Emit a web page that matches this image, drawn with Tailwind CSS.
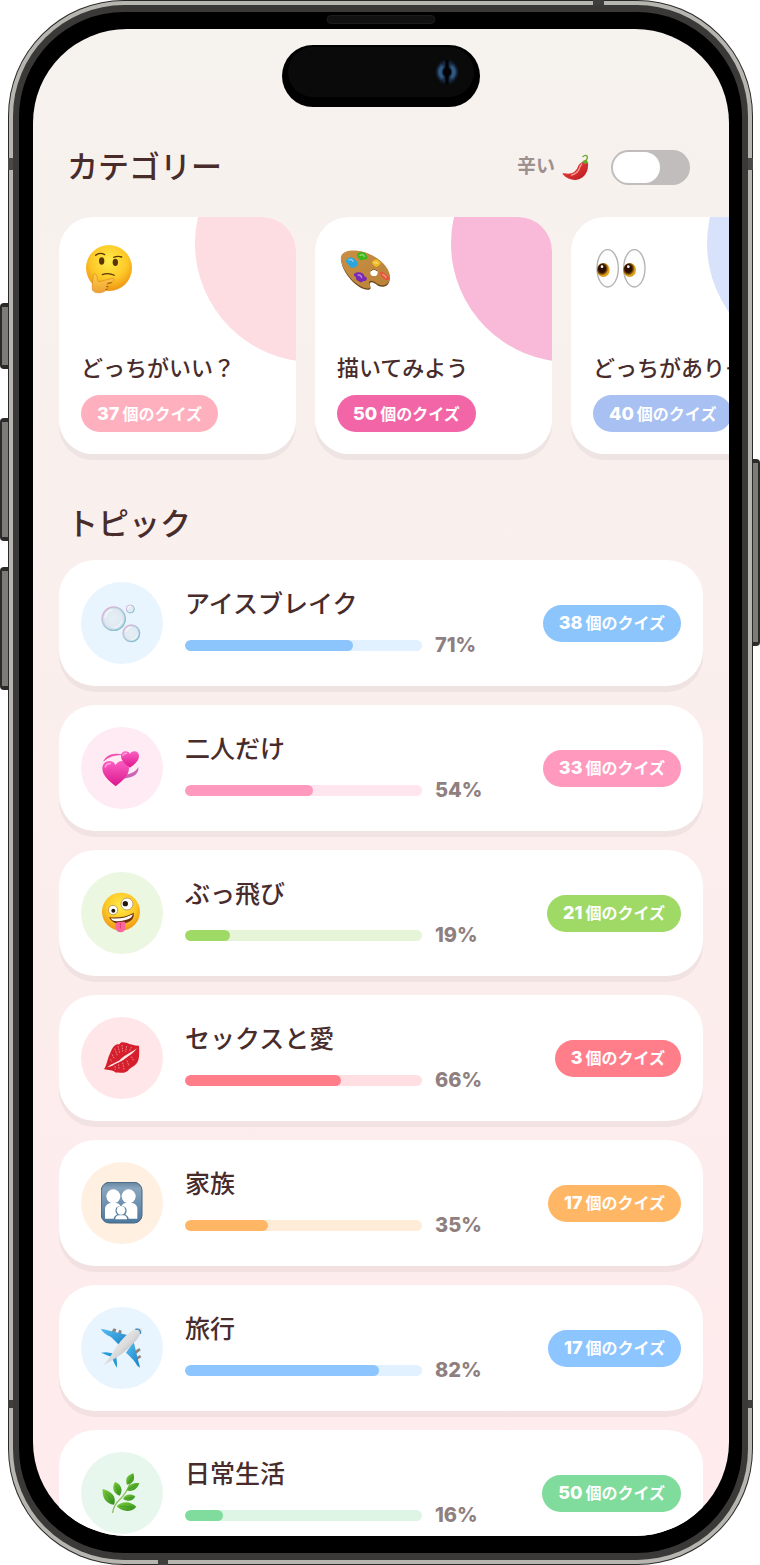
<!DOCTYPE html>
<html lang="ja">
<head>
    <meta charset="UTF-8">
    <meta name="viewport" content="width=device-width, initial-scale=1.0">
    <title>クイズ</title>
    <script src="https://cdn.jsdelivr.net/npm/@tailwindcss/browser@4"></script>
</head>
<body class="bg-white font-['Inter','Noto_Sans_CJK_JP',sans-serif] text-[#482c2c]">

<!-- Icon sprite -->
<svg class="absolute size-0" aria-hidden="true">
    <defs>
        <radialGradient id="face" cx=".5" cy=".35" r=".65">
            <stop offset="0" stop-color="#ffec4a"/><stop offset=".6" stop-color="#fdc927"/><stop offset="1" stop-color="#ee9415"/>
        </radialGradient>
        <linearGradient id="hand" x2="0" y2="1"><stop stop-color="#ffd04a"/><stop offset="1" stop-color="#eda033"/></linearGradient>
        <linearGradient id="wood" x2="1" y2="1"><stop stop-color="#c99045"/><stop offset="1" stop-color="#b98238"/></linearGradient>
        <radialGradient id="iris" cx=".4" cy=".4"><stop offset=".55" stop-color="#2c0f02"/><stop offset=".75" stop-color="#7a4605"/><stop offset="1" stop-color="#dca41c"/></radialGradient>
        <radialGradient id="bubble"><stop offset="0" stop-color="#e6eff5"/><stop offset=".75" stop-color="#dfe9f1"/><stop offset="1" stop-color="#c4d8e5"/></radialGradient>
        <linearGradient id="rim" x2="1" y2="1"><stop stop-color="#f3a6d3"/><stop offset=".4" stop-color="#b9c4d6"/><stop offset="1" stop-color="#6dbccb"/></linearGradient>
        <linearGradient id="heart" x2="0" y2="1"><stop stop-color="#fb5fc3"/><stop offset="1" stop-color="#dc168c"/></linearGradient>
        <linearGradient id="tile" x2="0" y2="1"><stop stop-color="#66869f"/><stop offset=".15" stop-color="#89a5bf"/><stop offset="1" stop-color="#4d789d"/></linearGradient>
        <linearGradient id="hull" x2="1" y2="1"><stop stop-color="#ffffff"/><stop offset=".5" stop-color="#dcdcdd"/><stop offset="1" stop-color="#8b8d91"/></linearGradient>
        <linearGradient id="wing" x2="1" y2="1"><stop stop-color="#5abdf0"/><stop offset="1" stop-color="#1680c4"/></linearGradient>
        <linearGradient id="leaf" x2="1" y2="1"><stop stop-color="#7fcf3c"/><stop offset="1" stop-color="#2e8a1c"/></linearGradient>
        <linearGradient id="chili" x2="1" y2="1"><stop stop-color="#f2524a"/><stop offset="1" stop-color="#b8141c"/></linearGradient>
    </defs>

    <symbol id="thinking" viewBox="0 0 162 162">
        <circle cx="84" cy="81" r="69" fill="url(#face)"/>
        <path d="M44 43 Q56 32 71 41 M98 49 Q110 44 122 48" fill="none" stroke="#5a3505" stroke-width="4" stroke-linecap="round"/>
        <ellipse cx="62" cy="60" rx="8" ry="11" fill="#5a3505"/>
        <ellipse cx="103" cy="64" rx="8" ry="11" fill="#5a3505"/>
        <path d="M64 101 Q82 94 100 103" fill="none" stroke="#5a3505" stroke-width="3.5" stroke-linecap="round"/>
        <path d="M37 101 C43 96 48 101 49 113 L52 122 C66 121 82 113 97 112 C104 114 99 122 91 124 L77 130 C83 134 80 146 72 150 C60 158 40 157 35 148 C31 136 36 118 37 101Z" fill="url(#hand)" stroke="#d98a1e" stroke-width="2"/>
        <path d="M79 127 L92 125 M76 137 H82 M74 145 H79" stroke="#8f5410" stroke-width="3"/>
    </symbol>

    <symbol id="palette" viewBox="0 0 162 162">
        <path d="M13 61 C8 38 28 26 62 31 C107 36 154 72 158 108 C160 134 140 143 123 134 C112 126 102 120 99 127 C96 134 104 139 99 145 C75 156 18 105 13 61Z" fill="#6c4517"/>
        <path d="M12 57 C8 36 28 26 62 29 C107 34 155 70 159 105 C160 130 140 139 124 130 C112 122 101 116 97 122 C94 129 104 135 99 141 C75 151 18 101 12 57Z" fill="url(#wood)"/>
        <ellipse cx="111" cy="95" rx="11" ry="10" fill="#fff"/>
        <path d="M101 91 Q108 80 121 90" fill="none" stroke="#7a4e1a" stroke-width="3"/>
        <path d="M27 58 Q37 45 48 51 L60 61 Q66 77 56 77 L46 81 Q38 79 36 72 Q27 68 27 58Z" fill="#2ba6dd"/>
        <path d="M62 36 Q76 30 85 37 L92 48 Q89 60 80 55 Q72 62 66 53 Q57 47 62 36Z" fill="#3fb61c"/>
        <path d="M107 60 Q118 52 125 59 Q135 66 128 71 L119 78 Q110 76 107 69 Q102 65 107 60Z" fill="#f0bd22"/>
        <path d="M51 99 Q58 92 65 94 Q79 94 82 105 L90 111 Q89 122 79 120 Q71 128 65 120 Q55 117 57 108 Q49 105 51 99Z" fill="#7a28b4"/>
        <path d="M129 94 Q140 91 147 101 Q158 106 157 114 Q147 122 140 112 Q130 107 129 94Z" fill="#ec523a"/>
        <path d="M36 57 Q43 52 48 61 M69 43 Q77 38 82 46 M112 66 Q118 62 121 67 M63 102 Q72 101 74 110 M137 101 Q144 103 147 109" fill="none" stroke="#fff" stroke-opacity=".45" stroke-width="4" stroke-linecap="round"/>
    </symbol>

    <symbol id="eyes" viewBox="0 0 162 162">
        <ellipse cx="44" cy="82" rx="32" ry="56" fill="#fdfdfd" stroke="#b3b1b3" stroke-width="4"/>
        <ellipse cx="124" cy="82" rx="32" ry="56" fill="#fdfdfd" stroke="#b3b1b3" stroke-width="4"/>
        <ellipse cx="31" cy="87" rx="19" ry="21" fill="url(#iris)"/>
        <ellipse cx="110" cy="87" rx="19" ry="21" fill="url(#iris)"/>
        <circle cx="27" cy="77" r="4" fill="#fff"/>
        <circle cx="106" cy="77" r="4" fill="#fff"/>
    </symbol>

    <symbol id="pepper" viewBox="0 0 81 81">
        <path d="M60 25 Q69 18 78 28 Q80 55 62 70 C45 83 18 79 2 61 Q0 56 8 58 C28 62 40 55 46 42 Q51 28 60 25Z" fill="url(#chili)"/>
        <path d="M59 30 Q54 36 51 46 Q46 59 29 63" fill="none" stroke="#ff9d92" stroke-width="4" stroke-linecap="round"/>
        <path d="M58 26 Q65 17 71 17 Q77 18 79 29 Q73 26 70 31 Q65 24 58 26Z" fill="#6ba92e"/>
        <path d="M72 20 Q80 8 73 5 Q68 2 63 8" fill="none" stroke="#6ba92e" stroke-width="4" stroke-linecap="round"/>
    </symbol>

    <symbol id="bubbles" viewBox="0 0 126 126">
        <g fill="url(#bubble)" stroke="url(#rim)">
            <circle cx="38" cy="50" r="35" stroke-width="4"/>
            <circle cx="91" cy="94" r="25" stroke-width="4"/>
            <circle cx="88" cy="21" r="12" stroke-width="3"/>
        </g>
        <path d="M12 46 Q16 28 33 23 M74 89 Q78 78 88 76 M80 19 Q83 13 88 13" fill="none" stroke="#fff" stroke-width="5" stroke-linecap="round" stroke-opacity=".6"/>
        <path d="M37 77 Q56 75 63 57 M91 112 Q105 111 109 98" fill="none" stroke="#fff" stroke-width="4" stroke-linecap="round" stroke-opacity=".5"/>
    </symbol>

    <symbol id="hearts" viewBox="0 0 126 126">
        <path d="M8 42 Q22 15 64 23 Q30 22 8 42Z" fill="#f04cae" stroke="#f04cae" stroke-width="2"/>
        <path d="M112 60 Q116 90 66 95 L73 83 Q102 80 112 60Z" fill="#c965b4"/>
        <path d="M44 118 C24 102 4 86 4 64 C4 50 14 42 25 42 C34 42 41 47 44 55 C47 47 54 42 63 42 C74 42 84 50 84 64 C84 86 64 102 44 118Z" fill="url(#heart)"/>
        <path d="M87 62 C73 52 60 41 60 27 C60 18 66 13 74 13 C80 13 85 16 87 21 C89 16 94 13 100 13 C108 13 114 18 114 27 C114 41 101 52 87 62Z" fill="url(#heart)"/>
        <path d="M13 60 Q16 49 28 50 M66 25 Q68 18 76 19" fill="none" stroke="#ff9adb" stroke-width="5" stroke-linecap="round"/>
    </symbol>

    <symbol id="zany" viewBox="0 0 126 126">
        <circle cx="60" cy="59" r="57" fill="url(#face)"/>
        <circle cx="36" cy="54" r="14" fill="#fff" stroke="#a9783a" stroke-width="2"/>
        <circle cx="78" cy="36" r="18" fill="#fff" stroke="#a9783a" stroke-width="2"/>
        <circle cx="37" cy="56" r="6" fill="#24190f"/>
        <circle cx="73" cy="35" r="8" fill="#24190f"/>
        <path d="M24 76 Q68 80 98 62 Q102 84 76 93 Q39 104 24 76Z" fill="#6b3008"/>
        <path d="M29 79 Q68 83 95 67 Q94 77 81 82 Q50 92 34 85Z" fill="#fff"/>
        <path d="M43 93 Q58 87 73 90 V108 Q71 121 59 121 Q46 121 44 108Z" fill="#f9659c"/>
        <path d="M58 93 V108" stroke="#d43d76" stroke-width="3" stroke-linecap="round"/>
    </symbol>

    <symbol id="kiss" viewBox="0 0 126 126">
        <path d="M9 97 C18 84 19 64 29 45 C36 28 43 22 51 22 C58 24 56 16 64 16 C78 15 91 27 114 26 C115 48 116 70 106 80 C96 91 86 92 80 102 C66 112 55 104 45 107 C35 99 22 100 9 97Z" fill="#d61f2c"/>
        <path d="M19 91 C36 78 46 76 56 70 C65 58 85 50 108 34 C94 53 86 54 75 63 C62 75 44 78 33 87Z" fill="#ffe7e9"/>
        <path d="M41 35 L49 55 M51 27 L56 48 M63 24 L65 44 M77 27 L74 45 M91 30 L86 42 M33 52 L40 66 M28 66 L33 75 M53 82 L54 98 M65 77 L69 97 M78 71 L84 87 M91 59 L99 72 M42 87 L43 98" stroke="#fff" stroke-width="2.5" stroke-opacity=".55" stroke-dasharray="5 3"/>
    </symbol>

    <symbol id="family" viewBox="0 0 126 126">
        <rect x="1" y="1" width="122" height="122" rx="24" fill="url(#tile)" stroke="#426584" stroke-width="3"/>
        <g fill="#fff">
            <path d="M12 110 V82 Q13 62 34 62 H39 Q56 62 60 75 Q64 62 80 62 H88 Q109 62 109 82 V110Z"/>
            <circle cx="37" cy="43" r="21"/>
            <circle cx="83" cy="43" r="21"/>
        </g>
        <path d="M38 112 Q38 101 48 98 Q39 86 47 76 Q60 66 73 76 Q81 86 73 98 Q83 101 83 112Z" fill="#5880a3"/>
        <circle cx="60" cy="85" r="13" fill="#fff"/>
        <path d="M43 112 Q43 101 54 100 H67 Q78 101 78 112Z" fill="#fff"/>
    </symbol>

    <symbol id="plane" viewBox="0 0 126 126">
        <path d="M30 17 L38 4 L46 7 L42 20Z M50 20 L55 8 L62 11 L60 25Z M101 72 L115 63 L119 70 L106 80Z M105 91 L117 84 L121 91 L108 99Z" fill="#8f8580"/>
        <path d="M0 5 L14 8 L82 25 L58 58 L30 30 Q4 18 0 5Z" fill="url(#wing)"/>
        <path d="M117 122 L109 116 Q99 98 75 77 L98 44 L111 98Z" fill="url(#wing)"/>
        <path d="M0 77 L15 76 L43 80 L33 91Z M48 122 L42 113 L34 95 L45 84 L48 108Z" fill="#279ad8"/>
        <path d="M8 115 L29 87 Q57 37 91 13 Q111 -3 121 5 Q126 12 111 33 Q86 66 43 94Z" fill="url(#hull)"/>
        <path d="M103 7 Q119 4 119 20" fill="none" stroke="#3688bd" stroke-width="4"/>
    </symbol>

    <symbol id="herb" viewBox="0 0 126 126">
        <path d="M35 121 Q39 98 55 84 Q78 62 88 31" fill="none" stroke="#8cbc5d" stroke-width="4" stroke-linecap="round"/>
        <g fill="url(#leaf)">
            <path d="M97 4 C103 20 98 36 78 38 C71 20 80 9 97 4Z"/>
            <path d="M115 33 C110 51 94 61 77 55 C81 38 95 31 115 33Z"/>
            <path d="M42 30 C61 37 67 55 56 71 C36 64 32 46 42 30Z"/>
            <path d="M5 51 C32 57 48 76 39 98 C14 96 3 76 5 51Z"/>
            <path d="M103 73 C96 89 78 90 66 80 C74 65 90 64 103 73Z"/>
            <path d="M106 104 C92 122 64 121 47 103 C64 85 90 89 106 104Z"/>
        </g>
        <path d="M94 13 L80 35 M107 37 L82 52 M44 39 L53 64 M13 60 L36 92 M97 76 L71 79 M97 105 L55 103" stroke="#23751a" stroke-opacity=".45" stroke-width="2"/>
    </symbol>
</svg>

<div class="relative h-screen overflow-hidden pl-2 pr-[7px]">

    <!-- Side buttons -->
    <div class="absolute left-0 top-[303px] h-[66px] w-2 rounded-l-sm border-y-4 border-l-2 border-[#2c2b29] bg-[#7e7c76]"></div>
    <div class="absolute left-0 top-[418px] h-[123px] w-2 rounded-l-sm border-y-4 border-l-2 border-[#2c2b29] bg-[#7e7c76]"></div>
    <div class="absolute left-0 top-[567px] h-[123px] w-2 rounded-l-sm border-y-4 border-l-2 border-[#2c2b29] bg-[#7e7c76]"></div>
    <div class="absolute right-0 top-[459px] h-[187px] w-2 rounded-r-sm border-y-4 border-r-2 border-[#2c2b29] bg-[#7e7c76]"></div>

    <!-- Phone body -->
    <div class="relative h-full rounded-[116px] bg-[#2b2a29] p-px">
        <div class="h-full rounded-[115px] bg-[#b7b5b0] p-1">
            <div class="h-full rounded-[111px] bg-[#3a3937] px-[6px] py-[7px]">
                <div class="h-full rounded-[105px] bg-black py-[17px] pl-[14px] pr-[13px]">

                    <!-- Screen -->
                    <main class="h-full overflow-hidden rounded-[94px] bg-linear-to-b from-[#f6f2ee] via-[#fbeeed] via-50% to-[#ffebed] pt-[120px]">
                        <header class="flex h-9 items-center justify-between pl-[34px] pr-[39px]">
                            <h1 class="text-[31px] font-medium leading-9">カテゴリー</h1>
                            <div class="flex items-center">
                                <label for="spicy" class="flex items-center gap-[7px] text-[19px] font-bold leading-6 text-[#9d908f]">
                                    辛い
                                    <svg class="size-[27px]"><use href="#pepper"/></svg>
                                </label>
                                <input id="spicy" type="checkbox" class="ml-[22px] h-[35px] w-[79px] appearance-none rounded-full bg-[#c0bdbc] p-[2px] before:block before:h-[31px] before:w-[47px] before:rounded-full before:bg-white before:content-[''] checked:bg-[#ff7e8a] checked:before:ml-7">
                            </div>
                        </header>

                        <section id="categories" class="mt-8 flex gap-[19px] pl-[26px]"></section>

                        <h2 class="mt-[50px] pl-[34px] text-[31px] font-medium leading-10">トピック</h2>
                        <section id="topics" class="mt-4 flex flex-col gap-[19px] px-[26px]"></section>
                    </main>
                </div>
            </div>
        </div>

        <!-- Antenna bands -->
        <div class="absolute right-[149px] top-0 h-[5px] w-[11px] bg-[#3f3e3c]"></div>
        <div class="absolute bottom-0 left-[150px] h-[5px] w-[10px] bg-[#3f3e3c]"></div>
        <div class="absolute left-0 top-[158px] h-3 w-[5px] bg-[#4a4947]"></div>
        <div class="absolute right-0 top-[158px] h-3 w-[5px] bg-[#4a4947]"></div>
        <div class="absolute bottom-[157px] left-0 h-2 w-[5px] bg-[#3f3e3c]"></div>
        <div class="absolute bottom-[157px] right-0 h-2 w-[5px] bg-[#3f3e3c]"></div>

        <!-- Speaker and camera island -->
        <div class="absolute left-1/2 top-[15px] h-[9px] w-[109px] -translate-x-1/2 rounded-full border border-[#1c1c1c] bg-[#111111]"></div>
        <div class="absolute left-1/2 top-[45px] h-[62px] w-[198px] -translate-x-1/2 rounded-full bg-black px-[6px] pt-[2px]">
            <div class="flex h-[50px] items-center justify-end rounded-full bg-[#0a0a0a] pr-[14px]">
                <svg viewBox="0 0 26 26" class="size-[26px]">
                    <g fill="none" stroke-linecap="round" class="blur-[1px]">
                        <path d="M10 5 Q1 13 10 21 M16 5 Q25 13 16 21" stroke="#14283f" stroke-width="6"/>
                        <path d="M8 8 Q4 13 8 18 M18 8 Q22 13 18 18" stroke="#35608f" stroke-width="4"/>
                    </g>
                    <circle cx="13" cy="13" r="4" fill="#020202"/>
                    <path d="M13 1 V25" stroke="#020202" stroke-width="3"/>
                </svg>
            </div>
        </div>
    </div>
</div>

<script>
    const categories = [
        { icon: 'thinking', title: 'どっちがいい？', count: 37, badge: 'bg-[#ffb0be]', circle: 'bg-[#fddde2]' },
        { icon: 'palette', title: '描いてみよう', count: 50, badge: 'bg-[#f266a8]', circle: 'bg-[#f9b9d8]' },
        { icon: 'eyes', title: 'どっちがありそう？', count: 40, badge: 'bg-[#a8c0f2]', circle: 'bg-[#d8e3fb]' },
    ];

    const topics = [
        { icon: 'bubbles', title: 'アイスブレイク', percent: 71, count: 38, fill: 'bg-[#8cc5fc]', track: 'bg-[#e1f1ff]', circle: 'bg-[#e8f5ff]' },
        { icon: 'hearts', title: '二人だけ', percent: 54, count: 33, fill: 'bg-[#ff99bd]', track: 'bg-[#ffe5ee]', circle: 'bg-[#ffebf3]' },
        { icon: 'zany', title: 'ぶっ飛び', percent: 19, count: 21, fill: 'bg-[#a0da66]', track: 'bg-[#e6f5d8]', circle: 'bg-[#ebf7e1]' },
        { icon: 'kiss', title: 'セックスと愛', percent: 66, count: 3, fill: 'bg-[#ff7e8a]', track: 'bg-[#ffdfe2]', circle: 'bg-[#ffe7e9]' },
        { icon: 'family', title: '家族', percent: 35, count: 17, fill: 'bg-[#ffb766]', track: 'bg-[#ffecd8]', circle: 'bg-[#fff0e2]' },
        { icon: 'plane', title: '旅行', percent: 82, count: 17, fill: 'bg-[#8cc5ff]', track: 'bg-[#e1f1ff]', circle: 'bg-[#e8f5ff]' },
        { icon: 'herb', title: '日常生活', percent: 16, count: 50, fill: 'bg-[#80dc9c]', track: 'bg-[#def5e5]', circle: 'bg-[#e8f7ed]' },
    ];

    // Pill with the number of quizzes
    function badge(count, color) {
        return `
            <span class="flex h-[37px] shrink-0 items-center gap-[3px] whitespace-nowrap rounded-full px-4 text-[16px] font-bold leading-6 text-white ${color}">
                <span class="text-[18px] font-extrabold">${count}</span>個のクイズ
            </span>`;
    }

    document.getElementById('categories').innerHTML = categories.map(item => `
        <div class="shrink-0 rounded-[34px] shadow-[0_6px_0_rgba(72,44,44,0.06)]">
            <a href="#${item.icon}" class="relative flex h-[237px] w-[237px] flex-col items-start overflow-hidden rounded-[34px] bg-white p-[22px]">
                <span class="absolute -top-[92px] left-[136px] size-[237px] rounded-full ${item.circle}"></span>
                <svg class="mt-[2px] size-[54px]"><use href="#${item.icon}"/></svg>
                <span class="mb-3 mt-auto whitespace-nowrap text-[22px] font-medium leading-[30px]">${item.title}</span>
                ${badge(item.count, item.badge)}
            </a>
        </div>`).join('');

    document.getElementById('topics').innerHTML = topics.map(item => `
        <a href="#${item.icon}" class="flex shrink-0 items-center rounded-[36px] bg-white p-[22px] shadow-[0_6px_0_rgba(72,44,44,0.06)]">
            <span class="flex size-[82px] shrink-0 items-center justify-center rounded-full ${item.circle}">
                <svg class="size-[42px]"><use href="#${item.icon}"/></svg>
            </span>
            <span class="ml-[22px] flex grow flex-col gap-[14px]">
                <span class="text-[25px] font-medium leading-[30px]">${item.title}</span>
                <span class="flex items-center gap-[13px]">
                    <span role="progressbar" aria-label="${item.title}" aria-valuenow="${item.percent}" class="h-[11px] w-[237px] overflow-hidden rounded-full ${item.track}">
                        <span class="block h-full rounded-full ${item.fill}" style="width: ${item.percent}%"></span>
                    </span>
                    <span class="text-[20px] font-extrabold leading-6 text-[#8f7f7f]">${item.percent}%</span>
                </span>
            </span>
            ${badge(item.count, item.fill)}
        </a>`).join('');
</script>

</body>
</html>
